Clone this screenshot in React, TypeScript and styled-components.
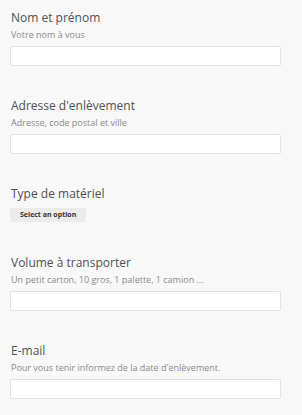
import styled, { createGlobalStyle } from "styled-components";

const GlobalStyle = createGlobalStyle`
  html, body {
    margin: 0;
    padding: 0;
    background: #f8f8f8;
  }
  body {
    font-family: "Open Sans", "Noto Sans", sans-serif;
  }
`;

const Form = styled.form`
  display: flex;
  flex-direction: column;
  padding: 10px 21px 0 10px;
`;

const Field = styled.div<{ $gap?: number }>`
  display: flex;
  flex-direction: column;
  margin-bottom: ${(p) => p.$gap ?? 32}px;
`;

const Label = styled.label`
  font-size: 12px;
  line-height: 16px;
  color: #505050;
  padding-left: 1px;
`;

const Hint = styled.span`
  font-size: 9px;
  line-height: 14px;
  margin-top: 2px;
  color: #8a8a8a;
  padding-left: 1px;
`;

const Input = styled.input`
  box-sizing: border-box;
  margin: 4px 0 0;
  height: 20px;
  width: 100%;
  background: #fff;
  border: 1px solid #e2e2e2;
  border-radius: 2px;
  outline: none;
`;

const SelectButton = styled.button`
  align-self: flex-start;
  margin-top: 6px;
  height: 14px;
  padding: 0 10px;
  border: none;
  border-radius: 2px;
  background: #ebebeb;
  color: #333;
  font-family: "Open Sans", "Noto Sans", sans-serif;
  font-weight: 700;
  font-size: 7px;
  line-height: 14px;
  cursor: pointer;
`;

type FieldSpec = { label: string; hint?: string };

const TextField = ({ label, hint }: FieldSpec) => (
  <Field>
    <Label>{label}</Label>
    {hint && <Hint>{hint}</Hint>}
    <Input type="text" />
  </Field>
);

export default function App() {
  return (
    <>
      <GlobalStyle />
      <Form onSubmit={(e) => e.preventDefault()}>
        <TextField label="Nom et prénom" hint="Votre nom à vous" />
        <TextField
          label="Adresse d'enlèvement"
          hint="Adresse, code postal et ville"
        />
        <Field $gap={33}>
          <Label>Type de matériel</Label>
          <SelectButton type="button">Select an option</SelectButton>
        </Field>
        <TextField
          label="Volume à transporter"
          hint="Un petit carton, 10 gros, 1 palette, 1 camion ..."
        />
        <TextField
          label="E-mail"
          hint="Pour vous tenir informez de la date d'enlèvement."
        />
      </Form>
    </>
  );
}
